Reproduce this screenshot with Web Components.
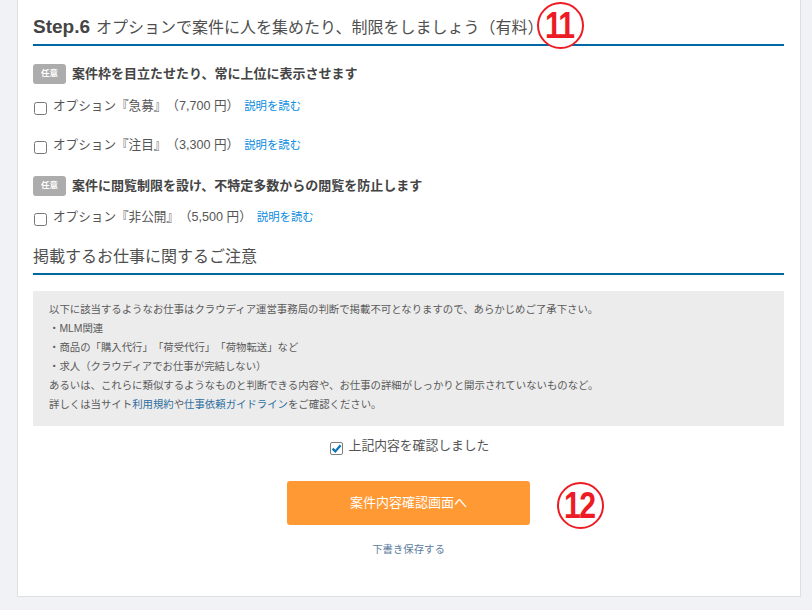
<!DOCTYPE html>
<html lang="ja">
<head>
<meta charset="utf-8">
<title>Step.6</title>
<style>
  html, body { margin: 0; height: 610px; overflow: hidden; }
  body {
    background: #f1f2f5;
    color: #444;
    font-family: "Liberation Sans", "Noto Sans CJK JP", sans-serif;
    font-size: 13px;
    text-spacing-trim: space-all;
  }
  notice-box a { color: #2f6f9f; text-decoration: none; }
</style>
</head>
<body>
<form-card>
  <step-heading style="height:26px"><b slot="step">Step.6</b>オプションで案件に人を集めたり、制限をしましょう（有料）</step-heading>

  <option-head style="margin-top:18px">案件枠を目立たせたり、常に上位に表示させます</option-head>
  <option-row price="オプション『急募』（7,700 円）" style="margin-top:10px"></option-row>
  <option-row price="オプション『注目』（3,300 円）" style="margin-top:15px"></option-row>

  <option-head style="margin-top:19px">案件に閲覧制限を設け、不特定多数からの閲覧を防止します</option-head>
  <option-row price="オプション『非公開』（5,500 円）" style="margin-top:9px"></option-row>

  <step-heading style="padding:15px 0 3px">掲載するお仕事に関するご注意</step-heading>

  <notice-box>
    <div>以下に該当するようなお仕事はクラウディア運営事務局の判断で掲載不可となりますので、あらかじめご了承下さい。</div>
    <div>・MLM関連</div>
    <div>・商品の「購入代行」「荷受代行」「荷物転送」など</div>
    <div>・求人（クラウディアでお仕事が完結しない）</div>
    <div>あるいは、これらに類似するようなものと判断できる内容や、お仕事の詳細がしっかりと開示されていないものなど。</div>
    <div>詳しくは当サイト<a href="#">利用規約</a>や<a href="#">仕事依頼ガイドライン</a>をご確認ください。</div>
  </notice-box>

  <confirm-check>上記内容を確認しました</confirm-check>
  <cta-button>案件内容確認画面へ</cta-button>
  <draft-link>下書き保存する</draft-link>

  <callout-mark num="11" style="left:519px;top:2px"></callout-mark>
  <callout-mark num="12" style="left:539px;top:482px"></callout-mark>
</form-card>

<script>
// small helper, every element just writes its shadow markup once
class Base extends HTMLElement {
  constructor(html) {
    super();
    this.attachShadow({ mode: 'open' }).innerHTML = html;
  }
}

customElements.define('form-card', class extends Base {
  constructor() {
    super(`<style>
      :host { display: block; position: relative; box-sizing: border-box; width: 784px; height: 597px;
        margin-left: 17px; padding: 0 16px 0 15px; background: #fff;
        border: solid #dfdfdf; border-width: 0 1px 1px 1px; }
    </style><slot></slot>`);
  }
});

customElements.define('step-heading', class extends Base {
  constructor() {
    super(`<style>
      :host { display: flex; align-items: baseline; gap: 6px; padding: 14px 0 4px; font-size: 16px; line-height: 26px;
        color: #4f4f4f; border-bottom: 2px solid #0068a3; }
      ::slotted(b) { font-size: 19px; color: #444; }
    </style><slot name="step"></slot><span><slot></slot></span>`);
  }
});

customElements.define('option-head', class extends Base {
  constructor() {
    super(`<style>
      :host { display: flex; align-items: center; gap: 6px; height: 20px; font-weight: bold; font-size: 13px; color: #444; }
      .badge { width: 33px; height: 20px; line-height: 18px; text-align: center; border-radius: 3px; background: #acacac;
        color: #fff; font-size: 8.5px; }
      .txt { padding-bottom: 3px; }
    </style><span class="badge">任意</span><span class="txt"><slot></slot></span>`);
  }
});

customElements.define('option-row', class extends Base {
  constructor() {
    super(`<style>
      :host { display: flex; align-items: center; height: 24px; font-size: 12.6px; color: #555; }
      input { margin: 4px 6px 0 1px; width: 13px; height: 13px; flex: none; }
      span { padding-bottom: 3px; }
      a { padding-bottom: 3px; margin-left: 5px; font-size: 11.4px; color: #0a8ce0; text-decoration: none; }
    </style><input type="checkbox"><span id="t"></span><a href="#">説明を読む</a>`);
  }
  connectedCallback() {
    this.shadowRoot.getElementById('t').textContent = this.getAttribute('price');
  }
});

customElements.define('notice-box', class extends Base {
  constructor() {
    super(`<style>
      :host { display: block; margin-top: 16px; padding: 10px 16px 12px; background: #ececec; font-size: 10.4px;
        line-height: 18.9px; color: #5a5a5a; }
      ::slotted(div) { white-space: nowrap; }
    </style><slot></slot>`);
  }
});

customElements.define('confirm-check', class extends Base {
  constructor() {
    super(`<style>
      :host { display: flex; justify-content: center; align-items: center; margin-top: 7px; height: 24px; padding-left: 2px;
        font-size: 12.8px; color: #555; }
      label { position: relative; flex: none; width: 13px; height: 13px; margin: 6px 6px 0 0; }
      input { display: block; margin: 0; width: 13px; height: 13px; appearance: none; box-sizing: border-box;
        background: #fff; border: 1px solid #7d7d7d; border-radius: 2px; }
      svg { position: absolute; left: 0; top: 0; pointer-events: none; }
      span { padding-bottom: 1px; }
    </style>
    <label><input type="checkbox" checked>
      <svg width="13" height="13" viewBox="0 0 13 13"><path d="M2.6 6.6 5.3 9.4 10.6 3.2" fill="none" stroke="#0a76bd" stroke-width="2.3"/></svg>
    </label><span><slot></slot></span>`);
  }
});

customElements.define('cta-button', class extends Base {
  constructor() {
    super(`<style>
      :host { display: flex; justify-content: center; margin-top: 24px; }
      button { width: 243px; height: 44px; padding: 0 0 3px; border: 0; border-radius: 3px; background: #ff9933; color: #fff;
        font: inherit; font-size: 13px; }
    </style><button type="button"><slot></slot></button>`);
  }
});

customElements.define('draft-link', class extends Base {
  constructor() {
    super(`<style>
      :host { display: block; margin-top: 17px; text-align: center; font-size: 10.4px; line-height: 16px; }
      a { color: #5b7c9d; text-decoration: none; }
    </style><a href="#"><slot></slot></a>`);
  }
});

// red numbered circle drawn over the screenshot
customElements.define('callout-mark', class extends Base {
  constructor() {
    super(`<style>
      :host { position: absolute; box-sizing: border-box; width: 47px; height: 47px; display: flex; align-items: center;
        justify-content: center; border: 2px solid #ed1c24; border-radius: 50%; background: #fff; color: #ed1c24;
        font-family: "Liberation Sans", sans-serif; font-weight: bold; font-size: 36px; letter-spacing: -2px; }
      span { transform: scaleX(.84); padding-right: 2px; }
    </style><span id="n"></span>`);
  }
  connectedCallback() {
    this.shadowRoot.getElementById('n').textContent = this.getAttribute('num');
  }
});
</script>
</body>
</html>
